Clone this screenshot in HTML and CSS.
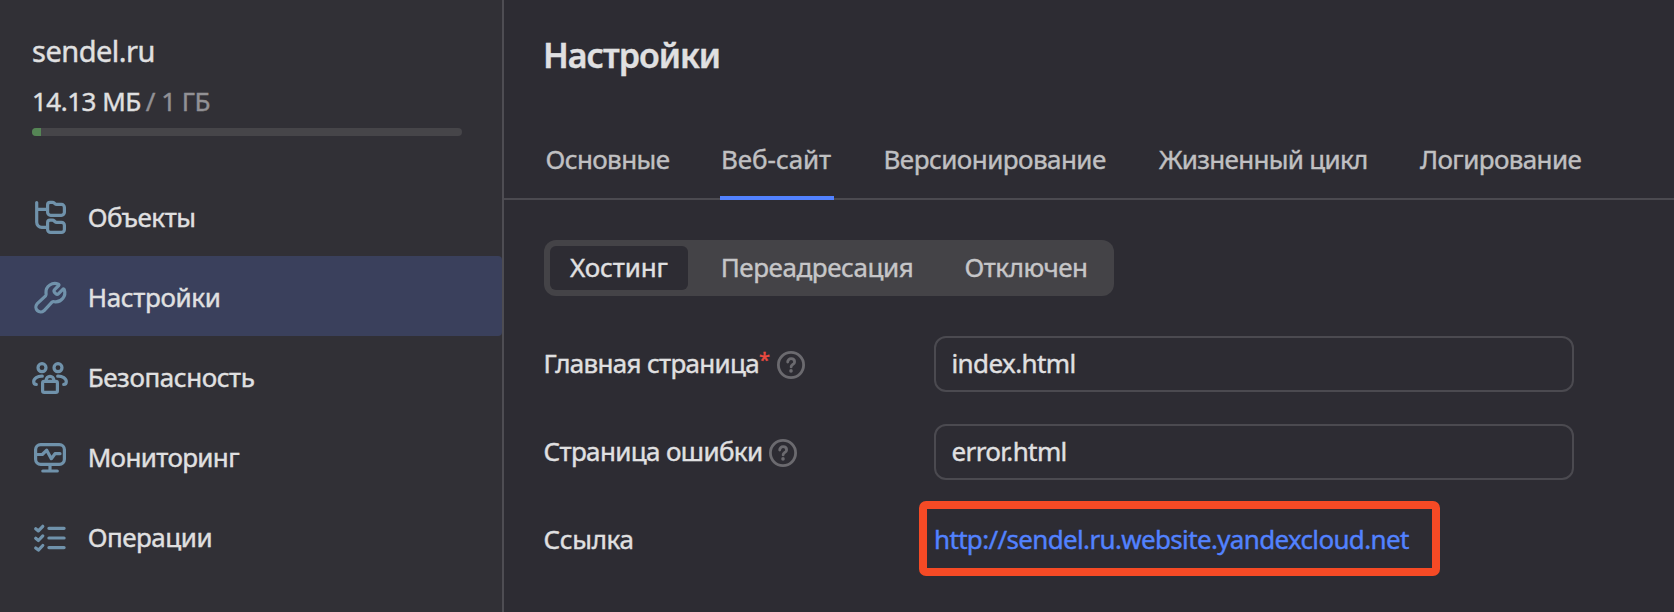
FILE: index.html
```
<!DOCTYPE html>
<html lang="ru">
<head>
<meta charset="utf-8">
<title>Настройки</title>
<link rel="stylesheet" href="styles.css">
</head>
<body>
<div class="app">
  <aside class="sidebar">
    <div class="bucket">
      <div class="bucket-name">sendel.ru</div>
      <div class="usage"><span class="used">14.13 МБ</span><span class="quota">/ 1 ГБ</span></div>
      <div class="progress"><div class="progress-fill"></div></div>
    </div>
    <nav class="menu">
      <a class="menu-item">
        <svg class="icon" viewBox="0 0 36 36"><path d="M4.700 4.500V24.300a5 5 0 0 0 5 5H15M4.700 11.300H15"/><path d="M15.600 6.800a2.500 2.500 0 0 1 2.500-2.500h2.300q1.100 0 1.900.8l.5.5q.8.8 1.900.8h4.700a3 3 0 0 1 3 3v4.900a3 3 0 0 1-3 3H18.600a3 3 0 0 1-3-3z"/><path d="M15.600 24.700a2.500 2.500 0 0 1 2.500-2.500h2.300q1.100 0 1.900.8l.5.5q.8.800 1.900.800h4.700a3 3 0 0 1 3 3v4.100a3 3 0 0 1-3 3H18.600a3 3 0 0 1-3-3z"/></svg>
        <span class="menu-text objects">Объекты</span></a>
      <a class="menu-item active">
        <svg class="icon" viewBox="0 0 36 36"><path d="M26.400 6.200C20.500 3.700 13.600 8 14 14.600c.1 1.500.4 2.400-.4 3.200L5 25.900a4.900 4.900 0 0 0 6.900 6.900l8.100-8.600c.8-.8 1.700-.5 3.200-.4C29.500 24.200 34.400 18 32.300 11.700c-.3-.9-.9-1-1.500-.4l-4.200 4.300c-.9.9-2 .9-2.900 0l-1.100-1.100c-.9-.9-.9-2 0-2.900l4.100-4.100c.5-.5.3-1-.3-1.300z"/></svg>
        <span class="menu-text settings">Настройки</span></a>
      <a class="menu-item">
        <svg class="icon" viewBox="0 0 36 36"><circle cx="10" cy="9.700" r="4"/><circle cx="26" cy="9.700" r="4"/><path d="M10.300 18.200C5.500 18 1.700 20.500 1.700 23.800c0 1.700 1.100 2.600 2.600 2.600M25.700 18.200c4.800-.2 8.600 2.300 8.600 5.600 0 1.700-1.100 2.600-2.600 2.600M14.200 23v-.9a3.800 3.800 0 0 1 7.600 0v.9"/><rect x="10.600" y="23.300" width="14.800" height="11" rx="1.600"/></svg>
        <span class="menu-text security">Безопасность</span></a>
      <a class="menu-item">
        <svg class="icon" viewBox="0 0 36 36"><rect x="3.600" y="6.600" width="28.800" height="19.700" rx="5"/><path d="M4 16.500h6.300l4.400-4.300 4.600 8.500 3.700-5h5M18 27v6M10.800 33h14.500"/></svg>
        <span class="menu-text monitoring">Мониторинг</span></a>
      <a class="menu-item">
        <svg class="icon" viewBox="0 0 36 36"><path d="M3.700 10.700l2.700 2.200 4.400-4.600M3.700 20.300l2.700 2.200 4.400-4.600M3.700 29.900l2.700 2.200 4.400-4.600M16.900 10.300H32.100M16.900 20H32.100M16.900 29.600H32.100"/></svg>
        <span class="menu-text operations">Операции</span></a>
    </nav>
  </aside>
  <main class="content">
    <h1 class="title">Настройки</h1>
    <nav class="tabs">
      <a class="tab main-tab">Основные</a>
      <a class="tab website selected">Веб-сайт</a>
      <a class="tab versions">Версионирование</a>
      <a class="tab lifecycle">Жизненный цикл</a>
      <a class="tab logging">Логирование</a>
    </nav>
    <div class="switch">
      <span class="option hosting chosen">Хостинг</span>
      <span class="option redirect">Переадресация</span>
      <span class="option disabled">Отключен</span>
    </div>
    <div class="form">
      <div class="row">
        <div class="label"><span class="index-label">Главная страница</span><span class="required">*</span>
          <svg class="help" viewBox="0 0 28 28"><circle cx="14" cy="14" r="12.600"/><path d="M10.700 11.100c0-2 1.400-3.400 3.400-3.400s3.500 1.300 3.500 3.200c0 2.500-3.500 2.600-3.500 5"/><circle class="dot" cx="14" cy="19.900" r="1.800"/></svg>
        </div>
        <div class="input index-value">index.html</div>
      </div>
      <div class="row">
        <div class="label"><span class="error-label">Страница ошибки</span>
          <svg class="help" viewBox="0 0 28 28"><circle cx="14" cy="14" r="12.600"/><path d="M10.700 11.100c0-2 1.400-3.400 3.400-3.400s3.500 1.300 3.500 3.200c0 2.500-3.500 2.600-3.500 5"/><circle class="dot" cx="14" cy="19.900" r="1.800"/></svg>
        </div>
        <div class="input error-value">error.html</div>
      </div>
      <div class="row">
        <div class="label"><span class="link-label">Ссылка</span></div>
        <div class="link-cell"><a class="link">http://sendel.ru.website.yandexcloud.net</a><div class="highlight"></div></div>
      </div>
    </div>
  </main>
</div>
</body>
</html>
```
FILE: styles.css
```
* { box-sizing: border-box; }
body {
  margin: 0;
  background: #2d2c33;
  color: #e0e0e1;
  font: 26px/34px "Noto Sans", sans-serif;
  white-space: nowrap;
  -webkit-text-stroke: 0.4px currentColor;
}
.app { display: flex; width: 1674px; height: 612px; overflow: hidden; }

.sidebar {
  flex: none;
  width: 504px;
  border-right: 2px solid #4e4d53;
  background: #313036;
}
.bucket { padding: 34px 40px 0 32px; }
.bucket-name { font-size: 29px; letter-spacing: -0.5px; }
.usage { display: flex; gap: 5px; margin-top: 16px; }
.used { letter-spacing: -0.5px; }
.quota { color: #929195; letter-spacing: -0.5px; }
.progress { height: 8px; margin-top: 10px; border-radius: 4px; background: #464549; overflow: hidden; }
.progress-fill { width: 9px; height: 8px; background: #558555; }

.menu { margin-top: 40px; }
.menu-item { display: flex; align-items: center; gap: 19px; height: 80px; padding-left: 32px; }
.menu-item.active { border-radius: 0 4px 4px 0; background: #3a405c; }
.menu-text { padding: 1px 0 0 0.7px; }
.icon { width: 36px; height: 36px; fill: none; stroke: #7092ab; stroke-width: 3.2; stroke-linecap: round; stroke-linejoin: round; }
.objects { letter-spacing: -0.48px; }
.settings { letter-spacing: -0.35px; }
.security { letter-spacing: -0.43px; }
.monitoring { letter-spacing: -0.65px; }
.operations { letter-spacing: -0.5px; }

.content { flex: 1; padding-top: 34px; }
.title { margin: 0 0 60px; padding-left: 39px; font-size: 34px; font-weight: 600; line-height: 42px; letter-spacing: -1px; }

.tabs {
  display: grid;
  grid-template-columns: 176px 163px 275px 262px auto;
  justify-items: start;
  height: 64px;
  padding-left: 40px;
  box-shadow: inset 0 -2px #4b4a50;
  color: #c0c0c2;
}
.tab { height: 64px; padding-left: 1px; border-bottom: 4px solid transparent; line-height: 46px; }
.tab.selected { width: 114px; border-color: #5282ff; }
.main-tab { padding-left: 1.5px; letter-spacing: -0.6px; }
.website { letter-spacing: -0.06px; }
.versions { padding-left: 0.5px; letter-spacing: -0.54px; }
.lifecycle { letter-spacing: -0.7px; }
.logging { padding-left: 0; letter-spacing: -0.61px; }

.switch {
  display: grid;
  grid-template-columns: 138px 258px 160px;
  width: 570px;
  height: 56px;
  margin: 40px 0 0 40px;
  padding: 6px;
  border-radius: 12px;
  background: #444347;
  color: #c6c6c8;
}
.option { border-radius: 6px; text-align: center; line-height: 42px; }
.option.chosen { background: #2d2c33; color: #e0e0e1; }
.hosting { letter-spacing: -0.12px; }
.redirect { letter-spacing: -0.43px; }
.disabled { letter-spacing: -0.51px; }

.form { display: grid; gap: 32px; margin: 40px 0 0 39.5px; }
.row { display: grid; grid-template-columns: 390.5px 640px; height: 56px; line-height: 54px; }
.label { display: flex; }
.required { color: #ee4a40; font-size: 20px; line-height: 48px; }
.help { width: 28px; height: 28px; margin: 15px 0 0 7px; fill: none; stroke: #6b6a6f; stroke-width: 2.8; stroke-linecap: round; }
.help .dot { fill: #6b6a6f; stroke: none; }
.index-label { letter-spacing: -0.7px; }
.error-label { letter-spacing: -0.64px; }
.link-label { letter-spacing: -0.35px; }
.input { padding-left: 15.500px; border: 2px solid #4b4a50; border-radius: 12px; line-height: 50px; }
.index-value { letter-spacing: -0.6px; }
.error-value { letter-spacing: -0.62px; }
.link-cell { position: relative; }
.link { color: #5282ff; letter-spacing: -0.66px; }
.highlight {
  position: absolute;
  left: -15px;
  top: -11px;
  width: 521px;
  height: 75px;
  border: 8px solid #f54a25;
  border-radius: 7px;
}
```
